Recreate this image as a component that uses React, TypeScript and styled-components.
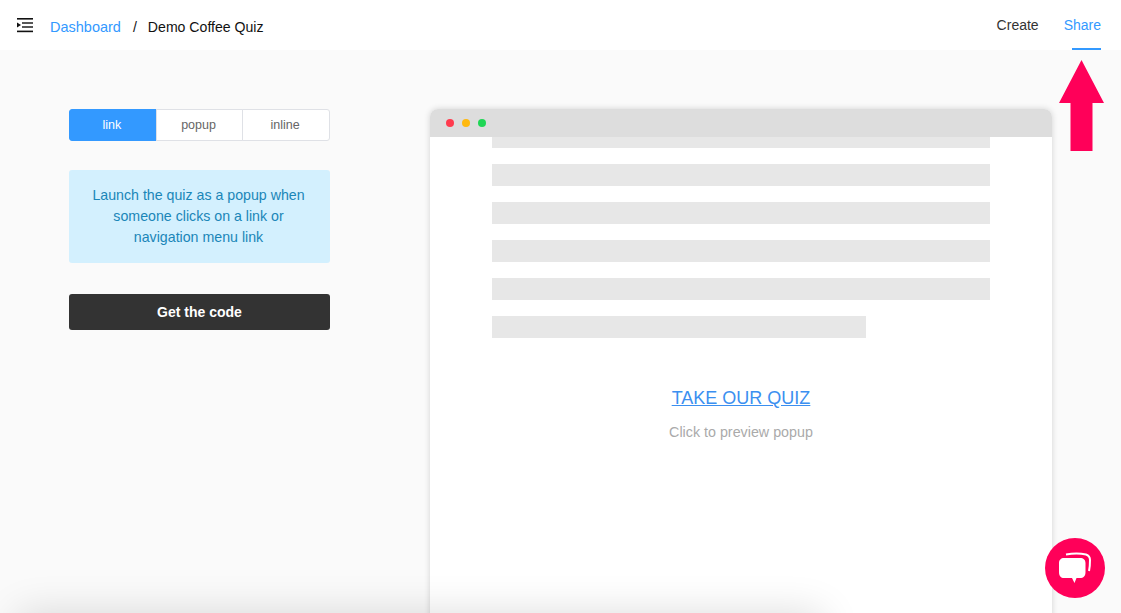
import React from "react";
import styled, { createGlobalStyle } from "styled-components";

const GlobalStyle = createGlobalStyle`
  html, body {
    margin: 0;
    height: 100%;
    overflow: hidden;
    background: #fafafa;
    font-family: "Liberation Sans", Arial, sans-serif;
  }
`;

const Page = styled.div`
  position: relative;
  width: 1121px;
  height: 613px;
  overflow: hidden;
  background: #fafafa;
`;

const Header = styled.header`
  height: 50px;
  background: #fff;
  display: flex;
  align-items: center;
  justify-content: space-between;
  padding: 0 20px 0 17px;
  box-sizing: border-box;
`;

const Crumbs = styled.div`
  display: flex;
  align-items: center;
  font-size: 14.1px;
  color: #111;
  padding-top: 3px;
`;

const MenuButton = styled.svg`
  display: block;
  margin-right: 17px;
  margin-top: -1px;
`;

const CrumbLink = styled.a`
  color: #3399ff;
  font-size: 14.5px;
`;

const Slash = styled.span`
  margin: 0 11px 0 12px;
`;

const Nav = styled.nav`
  display: flex;
  align-self: stretch;
  gap: 25px;
`;

const NavItem = styled.a<{ $active?: boolean }>`
  display: flex;
  align-items: center;
  justify-content: flex-end;
  position: relative;
  height: 50px;
  box-sizing: border-box;
  font-size: 14px;
  padding-bottom: 1px;
  color: ${({ $active }) => ($active ? "#3399ff" : "#333")};
  &::after {
    content: "";
    display: ${({ $active }) => ($active ? "block" : "none")};
    position: absolute;
    right: 0;
    bottom: 0;
    width: 29px;
    height: 2px;
    background: #3399ff;
  }
`;

const Content = styled.main`
  display: flex;
  align-items: flex-start;
  padding: 59px 0 0 69px;
`;

const Sidebar = styled.aside`
  width: 261px;
  margin-right: 100px;
  flex-shrink: 0;
`;

const Tabs = styled.div`
  display: flex;
  height: 32px;
  margin-bottom: 29px;
`;

const Tab = styled.button<{ $active?: boolean }>`
  flex: 1;
  margin: 0 0 0 -1px;
  padding: 0 2px 1px 0;
  font: 12.5px "Liberation Sans", Arial, sans-serif;
  background: ${({ $active }) => ($active ? "#3399ff" : "#fff")};
  color: ${({ $active }) => ($active ? "#fff" : "#666")};
  border: 1px solid ${({ $active }) => ($active ? "#3399ff" : "#dfe1e6")};
  &:first-child {
    margin-left: 0;
    border-radius: 3px 0 0 3px;
  }
  &:last-child {
    border-radius: 0 3px 3px 0;
  }
`;

const Info = styled.div`
  height: 93px;
  box-sizing: border-box;
  padding: 15px 12px 0 10px;
  margin-bottom: 31px;
  background: #d3f0fe;
  border-radius: 3px;
  color: #1a86b8;
  font-size: 14.2px;
  line-height: 21px;
  text-align: center;
`;

const CodeButton = styled.button`
  display: block;
  width: 100%;
  height: 36px;
  padding: 0;
  border: 0;
  border-radius: 3px;
  background: #333;
  color: #fff;
  font: bold 14px "Liberation Sans", Arial, sans-serif;
`;

const BrowserFrame = styled.section`
  width: 622px;
  height: 560px;
  flex-shrink: 0;
  background: #fff;
  border-radius: 8px 8px 0 0;
  box-shadow: 0 0 6px rgba(0, 0, 0, 0.16);
`;

const TitleBar = styled.div`
  height: 28px;
  display: flex;
  align-items: center;
  gap: 8px;
  padding-left: 16px;
  background: #dddddd;
  border-radius: 8px 8px 0 0;
`;

const Dot = styled.span<{ $color: string }>`
  width: 8px;
  height: 8px;
  border-radius: 50%;
  background: ${({ $color }) => $color};
`;

const Lines = styled.div`
  display: flex;
  flex-direction: column;
  gap: 16px;
  padding: 0 62px;
`;

const Line = styled.div<{ $height?: number; $width?: number }>`
  height: ${({ $height }) => $height ?? 22}px;
  width: ${({ $width }) => ($width ? `${$width}px` : "100%")};
  background: #e7e7e7;
`;

const Preview = styled.div`
  margin-top: 48px;
  text-align: center;
`;

const QuizLink = styled.a`
  display: block;
  color: #3b8ff0;
  font-size: 18px;
  line-height: 24px;
  text-decoration: underline;
`;

const Caption = styled.p`
  margin: 12px 0 0;
  color: #aaa;
  font-size: 14.3px;
  line-height: 20px;
`;

const BottomShadow = styled.div`
  position: absolute;
  left: 18px;
  top: 613px;
  width: 804px;
  height: 60px;
  box-shadow: 0 0 40px rgba(0, 0, 0, 0.14);
`;

const Arrow = styled.svg`
  position: absolute;
  left: 1059px;
  top: 60px;
`;

const ChatButton = styled.div`
  position: absolute;
  left: 1045px;
  top: 538px;
  width: 60px;
  height: 60px;
  border-radius: 50%;
  background: #ff0059;
  display: flex;
  align-items: center;
  justify-content: center;
`;

const App = () => (
  <Page>
    <GlobalStyle />
    <Header>
      <Crumbs>
        <MenuButton width="16" height="16" viewBox="0 0 16 16">
          <rect x="0" y="0" width="16" height="1.6" fill="#111" />
          <rect x="5" y="4.3" width="11" height="1.4" fill="#111" />
          <rect x="5" y="8.3" width="11" height="1.4" fill="#111" />
          <path d="M0 4.4 L4 7 L0 9.6 Z" fill="#111" />
          <rect x="0" y="12.6" width="16" height="1.6" fill="#111" />
        </MenuButton>
        <CrumbLink>Dashboard</CrumbLink>
        <Slash>/</Slash>
        <span>Demo Coffee Quiz</span>
      </Crumbs>
      <Nav>
        <NavItem>Create</NavItem>
        <NavItem $active>Share</NavItem>
      </Nav>
    </Header>
    <Content>
      <Sidebar>
        <Tabs>
          <Tab $active>link</Tab>
          <Tab>popup</Tab>
          <Tab>inline</Tab>
        </Tabs>
        <Info>
          Launch the quiz as a popup when
          <br />
          someone clicks on a link or
          <br />
          navigation menu link
        </Info>
        <CodeButton>Get the code</CodeButton>
      </Sidebar>
      <BrowserFrame>
        <TitleBar>
          <Dot $color="#ff3b4e" />
          <Dot $color="#ffb90f" />
          <Dot $color="#1fd655" />
        </TitleBar>
        <Lines>
          <Line $height={11} />
          <Line />
          <Line />
          <Line />
          <Line />
          <Line $width={374} />
        </Lines>
        <Preview>
          <QuizLink>TAKE OUR QUIZ</QuizLink>
          <Caption>Click to preview popup</Caption>
        </Preview>
      </BrowserFrame>
    </Content>
    <BottomShadow />
    <Arrow width="45" height="91" viewBox="0 0 45 91">
      <path d="M22.5 0 L45 43 L33.5 43 L33.5 91 L11.5 91 L11.5 43 L0 43 Z" fill="#ff0059" />
    </Arrow>
    <ChatButton>
      <svg width="32" height="32" viewBox="0 0 32 32">
        <path
          d="M7 2.5 C13 1.5 22 1.5 27 2.5 C30 3.5 31 5 31 8 C31 11 31 15 30 19"
          fill="none"
          stroke="#fff"
          strokeWidth="2"
        />
        <path
          d="M5 6 L21 6 C24.5 6 26.5 8 26.5 11 L26.5 20 C26.5 24 24.5 26 21 26 L17.5 26 L15.5 31 L13 26 L5 26 C2 26 0 24 0 20 L0 11 C0 8 2 6 5 6 Z"
          fill="#fff"
        />
      </svg>
    </ChatButton>
  </Page>
);

export default App;
